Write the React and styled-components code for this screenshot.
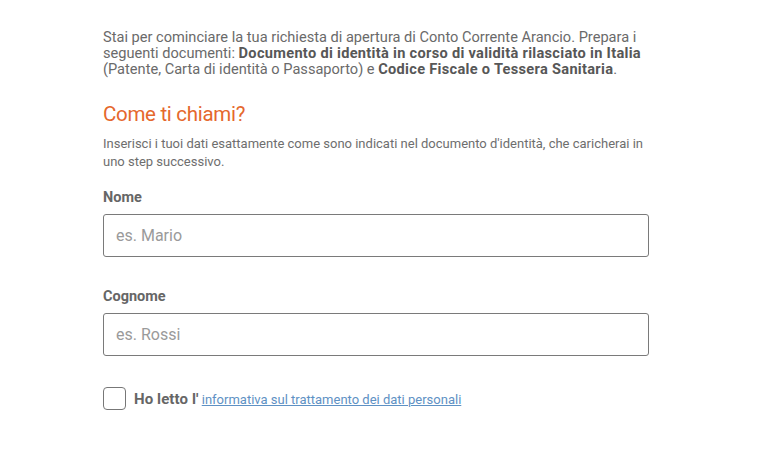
import React from "react";
import styled, { createGlobalStyle } from "styled-components";

const GlobalStyle = createGlobalStyle`
  html, body {
    margin: 0;
    padding: 0;
    background: #ffffff;
  }
  body {
    font-family: Roboto, "Liberation Sans", sans-serif;
    color: #6a6a6a;
  }
`;

const Page = styled.main`
  width: 546px;
  padding: 29px 0 0 103px;
`;

const Intro = styled.p`
  margin: 0;
  font-size: 14.6px;
  line-height: 16px;
  color: #6a6a6a;

  b {
    font-weight: 700;
    letter-spacing: 0.3px;
    color: #575757;
  }
`;

const Title = styled.h2`
  margin: 23px 0 0;
  font-size: 20.5px;
  line-height: 28px;
  font-weight: 400;
  letter-spacing: -0.3px;
  color: #e5682d;
`;

const Hint = styled.p`
  margin: 7px 0 0;
  font-size: 13px;
  line-height: 18px;
  color: #6e6e6e;
`;

const Field = styled.div`
  display: flex;
  flex-direction: column;
  margin-top: ${(p) => p.$top}px;
`;

const Label = styled.label`
  font-size: 14.5px;
  line-height: 18px;
  font-weight: 700;
  color: #666;
  margin-bottom: 7px;
`;

const Input = styled.input`
  box-sizing: border-box;
  width: 546px;
  height: 43px;
  padding: 0 12px;
  border: 1px solid #7a7a7a;
  border-radius: 3px;
  font-family: inherit;
  font-size: 16px;
  color: #444;
  background: #fff;
  outline: none;

  &::placeholder {
    color: #9a9a9a;
  }
`;

const Consent = styled.div`
  display: flex;
  align-items: center;
  gap: 8px;
  margin-top: 31px;
`;

const Box = styled.span`
  box-sizing: border-box;
  width: 23px;
  height: 23px;
  border: 1px solid #777;
  border-radius: 4px;
  flex-shrink: 0;
`;

const ConsentText = styled.span`
  font-size: 13px;
  color: #666;

  b {
    font-size: 15px;
    font-weight: 700;
    letter-spacing: 0.1px;
  }

  a {
    color: #5e91c4;
    text-decoration: underline;
  }
`;

export default function App() {
  return (
    <>
      <GlobalStyle />
      <Page>
        <Intro>
          Stai per cominciare la tua richiesta di apertura di Conto Corrente Arancio. Prepara i
          seguenti documenti: <b>Documento di identità in corso di validità rilasciato in Italia</b>{" "}
          (Patente, Carta di identità o Passaporto) e <b>Codice Fiscale o Tessera Sanitaria</b>.
        </Intro>
        <Title>Come ti chiami?</Title>
        <Hint>
          Inserisci i tuoi dati esattamente come sono indicati nel documento d'identità, che caricherai in
          uno step successivo.
        </Hint>
        <Field $top={18}>
          <Label htmlFor="nome">Nome</Label>
          <Input id="nome" placeholder="es. Mario" />
        </Field>
        <Field $top={31}>
          <Label htmlFor="cognome">Cognome</Label>
          <Input id="cognome" placeholder="es. Rossi" />
        </Field>
        <Consent>
          <Box />
          <ConsentText>
            <b>Ho letto l'</b> <a href="#">informativa sul trattamento dei dati personali</a>
          </ConsentText>
        </Consent>
      </Page>
    </>
  );
}
